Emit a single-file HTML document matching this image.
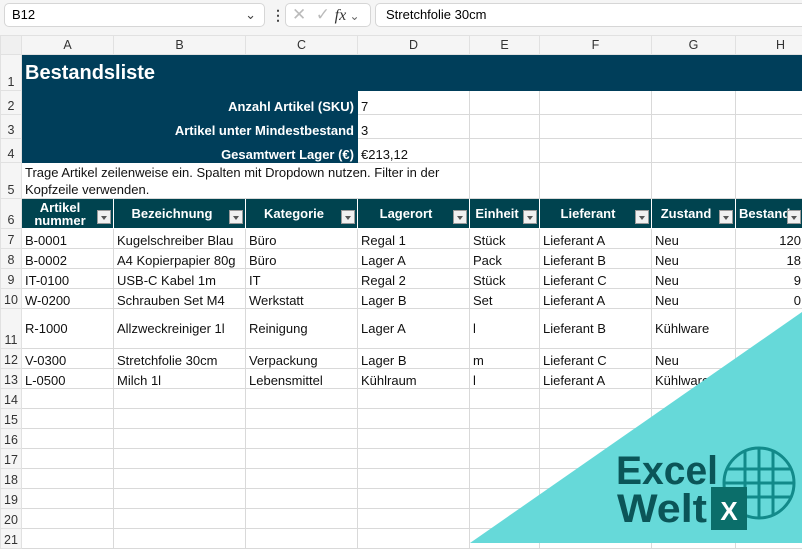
<!DOCTYPE html><html><head><meta charset="utf-8"><style>
body{margin:0;width:802px;height:543px;overflow:hidden;background:#fff;font-family:"Liberation Sans",sans-serif;position:relative}
.top{position:absolute;left:0;top:0;width:802px;height:36px;background:#f5f5f5}
.box{position:absolute;top:3px;height:24px;background:#fff;border:1px solid #d6d6d6;border-radius:5px;box-sizing:border-box;font-size:13px;line-height:22px}
table{position:absolute;left:0;top:35px;border-collapse:collapse;table-layout:fixed;width:825px}
td{border:1px solid #d9d9d9;padding:0 3px;font-size:13px;white-space:nowrap;overflow:hidden;color:#111;vertical-align:bottom;line-height:15px}
td.rh{background:#f5f5f5;color:#333;text-align:center;padding:0;font-size:12.5px;border-color:#e1e1e1}
tr.ch td{background:#f5f5f5;color:#333;text-align:center;font-size:12.5px;vertical-align:middle;border-color:#e1e1e1}
.dk{background:#003e5a;color:#fff;border-color:#003e5a;font-weight:bold}
.hd td.h{background:#00434f;color:#fff;font-weight:bold;text-align:center;border:1px solid #fff;position:relative;vertical-align:middle;padding-right:18px}
.f{position:absolute;right:2px;bottom:4px;width:14px;height:14px;background:#f0f0f0;border:1px solid #999;box-sizing:border-box}
.f:after{content:"";position:absolute;left:3px;top:5px;border-left:3px solid transparent;border-right:3px solid transparent;border-top:4px solid #555}
.r{text-align:right}
tr{height:20px}
</style></head><body>
<div class="top">
<div class="box" style="left:4px;width:261px;padding-left:7px">B12<span style="position:absolute;right:8px;top:0;color:#444">&#8964;</span></div>
<div style="position:absolute;left:271px;top:7px;font-size:14px;color:#444;font-weight:bold">⋮</div>
<div class="box" style="left:285px;width:86px;color:#bbb;font-size:17px;padding-left:6px">✕ &nbsp;✓ <i style="color:#333;font-family:'Liberation Serif',serif;font-size:16px">fx</i><span style="font-size:12px;color:#666"> ⌄</span></div>
<div class="box" style="left:375px;width:440px;padding-left:10px">Stretchfolie 30cm</div>
</div>
<table>
<colgroup><col style="width:21px"><col style="width:92px"><col style="width:132px"><col style="width:112px"><col style="width:112px"><col style="width:70px"><col style="width:112px"><col style="width:84px"><col style="width:90px"></colgroup>
<tr class="ch" style="height:19px"><td style="background:#f0f0f0"></td><td>A</td><td>B</td><td>C</td><td>D</td><td>E</td><td>F</td><td>G</td><td>H</td></tr>
<tr style="height:36px"><td class="rh">1</td><td class="dk" colspan="8" style="font-size:20px;vertical-align:middle;line-height:22px">Bestandsliste</td></tr>
<tr style="height:24px"><td class="rh">2</td><td class="dk r" colspan="3">Anzahl Artikel (SKU)</td><td>7</td><td></td><td></td><td></td><td></td></tr>
<tr style="height:24px"><td class="rh">3</td><td class="dk r" colspan="3">Artikel unter Mindestbestand</td><td>3</td><td></td><td></td><td></td><td></td></tr>
<tr style="height:24px"><td class="rh">4</td><td class="dk r" colspan="3">Gesamtwert Lager (€)</td><td style="border-top-color:#fff">€213,12</td><td></td><td></td><td></td><td></td></tr>
<tr style="height:36px"><td class="rh">5</td><td colspan="4" style="white-space:normal;line-height:17px">Trage Artikel zeilenweise ein. Spalten mit Dropdown nutzen. Filter in der Kopfzeile verwenden.</td><td></td><td></td><td></td><td></td></tr>
<tr class="hd" style="height:30px"><td class="rh">6</td><td class="h" style="line-height:13px;white-space:normal">Artikel nummer<span class="f"></span></td><td class="h">Bezeichnung<span class="f"></span></td><td class="h">Kategorie<span class="f"></span></td><td class="h">Lagerort<span class="f"></span></td><td class="h">Einheit<span class="f"></span></td><td class="h">Lieferant<span class="f"></span></td><td class="h">Zustand<span class="f"></span></td><td class="h" style="text-align:left">Bestand<span class="f" style="right:24px"></span></td></tr>
<tr><td class="rh">7</td><td>B-0001</td><td>Kugelschreiber Blau</td><td>Büro</td><td>Regal 1</td><td>Stück</td><td>Lieferant A</td><td>Neu</td><td class="r" style="padding-right:24px">120</td></tr>
<tr><td class="rh">8</td><td>B-0002</td><td>A4 Kopierpapier 80g</td><td>Büro</td><td>Lager A</td><td>Pack</td><td>Lieferant B</td><td>Neu</td><td class="r" style="padding-right:24px">18</td></tr>
<tr><td class="rh">9</td><td>IT-0100</td><td>USB-C Kabel 1m</td><td>IT</td><td>Regal 2</td><td>Stück</td><td>Lieferant C</td><td>Neu</td><td class="r" style="padding-right:24px">9</td></tr>
<tr><td class="rh">10</td><td>W-0200</td><td>Schrauben Set M4</td><td>Werkstatt</td><td>Lager B</td><td>Set</td><td>Lieferant A</td><td>Neu</td><td class="r" style="padding-right:24px">0</td></tr>
<tr style="height:40px"><td class="rh">11</td><td style="vertical-align:middle">R-1000</td><td style="vertical-align:middle">Allzweckreiniger 1l</td><td style="vertical-align:middle">Reinigung</td><td style="vertical-align:middle">Lager A</td><td style="vertical-align:middle">l</td><td style="vertical-align:middle">Lieferant B</td><td style="vertical-align:middle">Kühlware</td><td></td></tr>
<tr><td class="rh">12</td><td>V-0300</td><td>Stretchfolie 30cm</td><td>Verpackung</td><td>Lager B</td><td>m</td><td>Lieferant C</td><td>Neu</td><td></td></tr>
<tr><td class="rh">13</td><td>L-0500</td><td>Milch 1l</td><td>Lebensmittel</td><td>Kühlraum</td><td>l</td><td>Lieferant A</td><td>Kühlware</td><td></td></tr>
<tr><td class="rh">14</td><td></td><td></td><td></td><td></td><td></td><td></td><td></td><td></td></tr>
<tr><td class="rh">15</td><td></td><td></td><td></td><td></td><td></td><td></td><td></td><td></td></tr>
<tr><td class="rh">16</td><td></td><td></td><td></td><td></td><td></td><td></td><td></td><td></td></tr>
<tr><td class="rh">17</td><td></td><td></td><td></td><td></td><td></td><td></td><td></td><td></td></tr>
<tr><td class="rh">18</td><td></td><td></td><td></td><td></td><td></td><td></td><td></td><td></td></tr>
<tr><td class="rh">19</td><td></td><td></td><td></td><td></td><td></td><td></td><td></td><td></td></tr>
<tr><td class="rh">20</td><td></td><td></td><td></td><td></td><td></td><td></td><td></td><td></td></tr>
<tr><td class="rh">21</td><td></td><td></td><td></td><td></td><td></td><td></td><td></td><td></td></tr>
</table>
<svg style="position:absolute;left:0;top:0" width="802" height="543">
<polygon points="470,543 802,312 802,543" fill="#66d9d9"/>
<text x="616" y="484" font-family="Liberation Sans" font-weight="bold" font-size="40" fill="#0b5558" textLength="102" lengthAdjust="spacingAndGlyphs">Excel</text>
<text x="617" y="522" font-family="Liberation Sans" font-weight="bold" font-size="40" fill="#0b5558" textLength="90" lengthAdjust="spacingAndGlyphs">Welt</text>
<g fill="none" stroke="#128a8a" stroke-width="3">
<circle cx="759" cy="483" r="35"/>
<line x1="727" y1="469" x2="791" y2="469"/><line x1="724" y1="483" x2="794" y2="483"/><line x1="727" y1="497" x2="791" y2="497"/>
<line x1="745" y1="450" x2="745" y2="516"/><line x1="759" y1="448" x2="759" y2="518"/><line x1="773" y1="450" x2="773" y2="516"/>
</g>
<rect x="711" y="487" width="36" height="43" fill="#0b6e6a"/>
<text x="729" y="520" text-anchor="middle" font-family="Liberation Sans" font-weight="bold" font-size="26" fill="#fff">X</text>
</svg>
</body></html>
